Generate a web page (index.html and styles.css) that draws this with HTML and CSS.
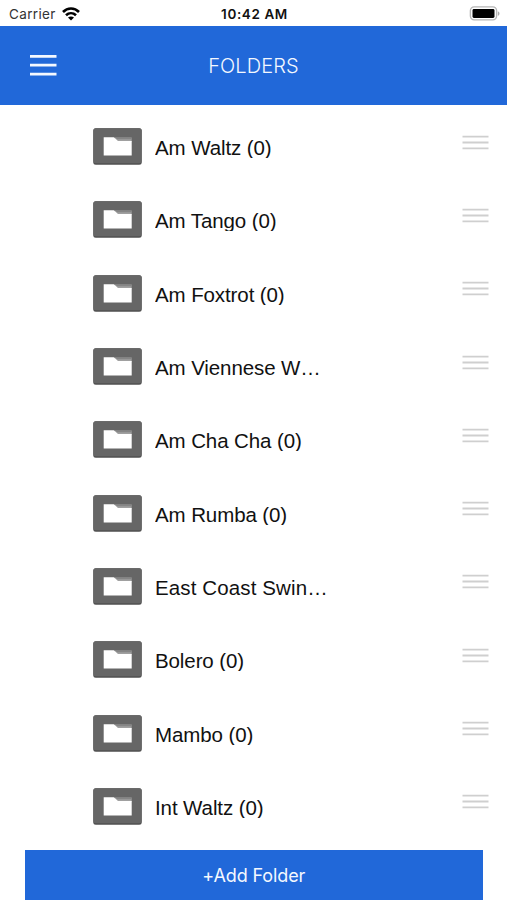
FILE: index.html
```html
<!DOCTYPE html>
<html lang="en">
<head>
  <meta charset="UTF-8" />
  <meta name="viewport" content="width=device-width, initial-scale=1.0" />
  <title>Folders</title>
  <link rel="stylesheet" href="styles.css">
</head>
<body>

  <!-- Shared icons -->
  <svg class="sprite">
    <symbol id="folder" viewBox="0 0 49 37">
      <rect x="0.3" y="0.3" width="48.4" height="36.5" rx="2.5" fill="#505050" />
      <rect x="0.3" y="0.3" width="48.4" height="35" rx="2.5" fill="#666" />
      <path d="M21 9.5H38.7V14H24Z" fill="#a0a0a0" />
      <path d="M22.4 9.8H38.7V11.2H24Z" fill="#858585" />
      <path d="M10.7 9.3H20.8L25 12.9H38.7V27.5H10.7Z" fill="#fff" />
    </symbol>
    <symbol id="grip" viewBox="0 0 27 15">
      <path d="M0.5 1.6H26.5M0.5 7.5H26.5M0.5 13.4H26.5" stroke="#cfcfcf" stroke-width="1.8" />
    </symbol>
  </svg>

  <!-- Status bar -->
  <div class="status">
    <div class="carrier">
      <span>Carrier</span>
      <svg width="18" height="14" viewBox="0 0 18 14" fill="none" stroke="#000" stroke-width="2.6">
        <path d="M1 5C5.5 0.4 12.5 0.4 17 5" />
        <path d="M4 8.3C6.9 5.5 11.1 5.5 14 8.3" />
        <path d="M6 10.5C7.7 9 10.3 9 12 10.5L9 13.5Z" fill="#000" stroke="none" />
      </svg>
    </div>
    <div class="time">10:42 AM</div>
    <svg class="battery" width="31" height="15" viewBox="0 0 31 15">
      <rect x="1.4" y="0.9" width="26.2" height="13" rx="3.8" fill="#fff" stroke="#b5b5b5" stroke-width="1.4" />
      <rect x="3.5" y="3" width="22" height="9" rx="1.4" fill="#000" />
      <path d="M28.9 5.2C31 6 31 9 28.9 9.8Z" fill="#aaa" />
    </svg>
  </div>

  <!-- Header -->
  <header>
    <svg class="menu" width="27" height="23" viewBox="0 0 27 23">
      <path d="M0 2.4H26.5M0 11.2H26.5M0 20.1H26.5" stroke="#f4f8ff" stroke-width="2.8" />
    </svg>
    <h1>FOLDERS</h1>
  </header>

  <!-- Folder list -->
  <ul class="folders">
    <li><svg class="icon"><use href="#folder" /></svg><span class="name">Am Waltz (0)</span><svg class="grip"><use href="#grip" /></svg></li>
    <li><svg class="icon"><use href="#folder" /></svg><span class="name">Am Tango (0)</span><svg class="grip"><use href="#grip" /></svg></li>
    <li><svg class="icon"><use href="#folder" /></svg><span class="name">Am Foxtrot (0)</span><svg class="grip"><use href="#grip" /></svg></li>
    <li><svg class="icon"><use href="#folder" /></svg><span class="name">Am Viennese W…</span><svg class="grip"><use href="#grip" /></svg></li>
    <li><svg class="icon"><use href="#folder" /></svg><span class="name">Am Cha Cha (0)</span><svg class="grip"><use href="#grip" /></svg></li>
    <li><svg class="icon"><use href="#folder" /></svg><span class="name">Am Rumba (0)</span><svg class="grip"><use href="#grip" /></svg></li>
    <li><svg class="icon"><use href="#folder" /></svg><span class="name wide">East Coast Swin…</span><svg class="grip"><use href="#grip" /></svg></li>
    <li><svg class="icon"><use href="#folder" /></svg><span class="name">Bolero (0)</span><svg class="grip"><use href="#grip" /></svg></li>
    <li><svg class="icon"><use href="#folder" /></svg><span class="name">Mambo (0)</span><svg class="grip"><use href="#grip" /></svg></li>
    <li><svg class="icon"><use href="#folder" /></svg><span class="name">Int Waltz (0)</span><svg class="grip"><use href="#grip" /></svg></li>
  </ul>

  <button class="add-btn">+Add Folder</button>

</body>
</html>
```
FILE: styles.css
```css
* { margin: 0; padding: 0; box-sizing: border-box; }
body { height: 900px; display: flex; flex-direction: column; overflow: hidden; background: #fff; color: #111; font-family: "Liberation Sans", Arial, sans-serif; }
svg { display: block; flex: none; }
.sprite { width: 0; height: 0; position: absolute; }

.status { height: 25.5px; flex: none; display: grid; grid-template-columns: 1fr auto 1fr; align-items: center; padding: 2px 7px 0 9px; font-family: Inter, sans-serif; }
.carrier { display: flex; align-items: center; gap: 6px; font-size: 13.5px; letter-spacing: 0.35px; color: #333; }
.time { font-size: 13.5px; font-weight: 600; letter-spacing: 0.6px; color: #111; }
.battery { justify-self: end; }

header { height: 79.5px; flex: none; display: grid; grid-template-columns: 1fr auto 1fr; align-items: center; padding: 1px 30px 0; background: #2168d9; }
h1 { grid-column: 2; font-family: Inter, sans-serif; font-size: 20px; font-weight: 300; letter-spacing: 0.1px; color: #f4f8ff; }

.folders { flex: none; list-style: none; padding-top: 5px; }
.folders li { height: 73.3px; display: flex; align-items: center; padding: 0 18px 0 93px; }
.icon { width: 49px; height: 37px; }
.name { height: 23px; margin-left: 13px; overflow: hidden; white-space: nowrap; font-size: 20.5px; line-height: 25px; letter-spacing: -0.1px; }
.wide { letter-spacing: 0.12px; }
.grip { width: 27px; height: 15px; margin: 0 0 9px auto; }

.add-btn { height: 50px; flex: none; margin: auto 24.5px 0 25px; border: none; background: #2168d9; color: #f4f8ff; font-family: Inter, sans-serif; font-size: 18px; font-weight: 400; letter-spacing: -0.1px; cursor: pointer; }
```
